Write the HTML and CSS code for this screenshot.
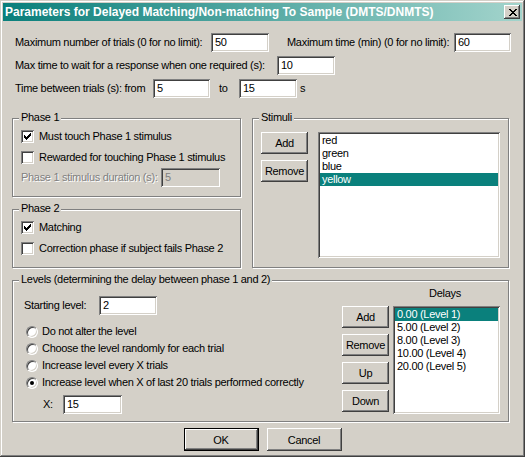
FILE: index.html
```html
<!DOCTYPE html>
<html>
<head>
<meta charset="utf-8">
<title>Parameters for Delayed Matching/Non-matching To Sample (DMTS/DNMTS)</title>
<link rel="stylesheet" href="styles.css">
</head>
<body>
<div class="window">
  <div class="titlebar">
    <span class="title">Parameters for Delayed Matching/Non-matching To Sample (DMTS/DNMTS)</span>
    <span class="close"><svg width="8" height="7" viewBox="0 0 8 7" shape-rendering="crispEdges"><path d="M0 0h2v1H0zM6 0h2v1H6zM1 1h2v1H1zM5 1h2v1H5zM2 2h4v1H2zM3 3h2v1H3zM2 4h4v1H2zM1 5h2v1H1zM5 5h2v1H5zM0 6h2v1H0zM6 6h2v1H6z"/></svg></span>
  </div>
  <div class="content">
    <div class="row">
      <span class="lbl w196">Maximum number of trials (0 for no limit):</span>
      <span class="edit">50</span>
      <span class="lbl w167 ml18">Maximum time (min) (0 for no limit):</span>
      <span class="edit w57">60</span>
    </div>
    <div class="row">
      <span class="lbl w262">Max time to wait for a response when one required (s):</span>
      <span class="edit">10</span>
    </div>
    <div class="row">
      <span class="lbl w138">Time between trials (s): from</span>
      <span class="edit w57">5</span>
      <span class="lbl w20 ml9">to</span>
      <span class="edit">15</span>
      <span class="lbl ml3">s</span>
    </div>

    <div class="cols">
      <div class="leftcol">
        <div class="group">
          <span class="legend">Phase 1</span>
          <div class="grp-body mt2">
            <div class="chk-row"><span class="chk"><svg width="7" height="7" viewBox="0 0 7 7" shape-rendering="crispEdges"><path d="M0 2h1v3H0zM1 3h1v3H1zM2 4h1v3H2zM3 3h1v3H3zM4 2h1v3H4zM5 1h1v3H5zM6 0h1v3H6z"/></svg></span><span class="chk-lbl">Must touch Phase 1 stimulus</span></div>
            <div class="chk-row"><span class="chk"></span><span class="chk-lbl">Rewarded for touching Phase 1 stimulus</span></div>
            <div class="row norow">
              <span class="lbl w140 disabled">Phase 1 stimulus duration (s):</span>
              <span class="edit w59 dis-edit">5</span>
            </div>
          </div>
        </div>
        <div class="group mt12">
          <span class="legend">Phase 2</span>
          <div class="grp-body mt2 pb-last">
            <div class="chk-row"><span class="chk"><svg width="7" height="7" viewBox="0 0 7 7" shape-rendering="crispEdges"><path d="M0 2h1v3H0zM1 3h1v3H1zM2 4h1v3H2zM3 3h1v3H3zM4 2h1v3H4zM5 1h1v3H5zM6 0h1v3H6z"/></svg></span><span class="chk-lbl">Matching</span></div>
            <div class="chk-row"><span class="chk"></span><span class="chk-lbl">Correction phase if subject fails Phase 2</span></div>
          </div>
        </div>
      </div>

      <div class="group stimuli">
        <span class="legend">Stimuli</span>
        <div class="stim-body">
          <div class="btncol">
            <span class="btn">Add</span>
            <span class="btn">Remove</span>
          </div>
          <div class="list stim-list">
            <div class="item">red</div>
            <div class="item">green</div>
            <div class="item">blue</div>
            <div class="item sel">yellow</div>
          </div>
        </div>
      </div>
    </div>

    <div class="group levels">
      <span class="legend">Levels (determining the delay between phase 1 and 2)</span>
      <div class="lv-body">
        <div class="lv-left">
          <div class="row start-row">
            <span class="lbl w75">Starting level:</span>
            <span class="edit">2</span>
          </div>
          <div class="radios">
            <div class="radio-row"><span class="radio"></span><span class="radio-lbl">Do not alter the level</span></div>
            <div class="radio-row"><span class="radio"></span><span class="radio-lbl">Choose the level randomly for each trial</span></div>
            <div class="radio-row"><span class="radio"></span><span class="radio-lbl">Increase level every X trials</span></div>
            <div class="radio-row"><span class="radio on"></span><span class="radio-lbl">Increase level when X of last 20 trials performed correctly</span></div>
          </div>
          <div class="row x-row">
            <span class="lbl w20">X:</span>
            <span class="edit w59">15</span>
          </div>
        </div>
        <div class="btncol lv-btns">
          <span class="btn">Add</span>
          <span class="btn">Remove</span>
          <span class="btn">Up</span>
          <span class="btn">Down</span>
        </div>
        <div class="delays">
          <div class="dl-label">Delays</div>
          <div class="list dlist">
            <div class="item sel">0.00 (Level 1)</div>
            <div class="item">5.00 (Level 2)</div>
            <div class="item">8.00 (Level 3)</div>
            <div class="item">10.00 (Level 4)</div>
            <div class="item">20.00 (Level 5)</div>
          </div>
        </div>
      </div>
    </div>

    <div class="actions">
      <span class="btn dlg default">OK</span>
      <span class="btn dlg">Cancel</span>
    </div>
  </div>
</div>
</body>
</html>
```

FILE: styles.css
```css
* { box-sizing: border-box; }
html, body { margin: 0; padding: 0; }
body {
  background: #d4d0c8;
  font-family: "Liberation Sans", Arial, sans-serif;
  font-size: 11px;
  letter-spacing: -0.3px;
  color: #000;
}
.window {
  width: 525px;
  height: 457px;
  padding: 3px;
  background: #d4d0c8;
  box-shadow: inset -1px -1px #404040, inset 1px 1px #d4d0c8, inset -2px -2px #808080, inset 2px 2px #fff;
  display: flex;
  flex-direction: column;
}
.titlebar {
  height: 18px;
  flex: none;
  display: flex;
  align-items: center;
  justify-content: space-between;
  padding: 0 2px 0 2px;
  background: linear-gradient(90deg, #0a7f7b 0%, #a3d4cc 100%);
}
.title {
  color: #fff;
  font-weight: bold;
  font-size: 12px;
  letter-spacing: 0;
  line-height: 18px;
  white-space: nowrap;
}
.close {
  width: 16px;
  height: 14px;
  background: #d4d0c8;
  box-shadow: inset -1px -1px #404040, inset 1px 1px #fff, inset -2px -2px #808080;
  display: flex;
  align-items: center;
  justify-content: center;
  padding-left: 1px;
}
.close svg { display: block; fill: #000; }

.content { padding: 12px 0 0 9px; flex: 1; }

.row { display: flex; align-items: center; height: 19px; padding-left: 3px; }
.row + .row { margin-top: 4px; }
.row.norow { padding-left: 0; margin-top: 0; }
.lbl { white-space: nowrap; line-height: 13px; flex: none; }
.w196 { width: 196px; }
.w167 { width: 167px; }
.w262 { width: 262px; }
.w138 { width: 138px; }
.w140 { width: 140px; }
.w75 { width: 75px; }
.w20 { width: 20px; }
.ml18 { margin-left: 18px; }
.ml9 { margin-left: 9px; }
.ml3 { margin-left: 3px; }
.mt2 { margin-top: 2px; }
.mt12 { margin-top: 12px; }

.edit {
  flex: none;
  width: 58px;
  height: 19px;
  line-height: 19px;
  padding: 0 3px 0 4px;
  background: #fff;
  box-shadow: inset 1px 1px #808080, inset -1px -1px #fff, inset 2px 2px #404040, inset -2px -2px #d4d0c8;
  white-space: nowrap;
}
.edit.w57 { width: 57px; }
.edit.w59 { width: 59px; }
.dis-edit { background: #d4d0c8; color: #808080; }
.disabled { color: #808080; text-shadow: 1px 1px #fff; }

.cols {
  display: grid;
  grid-template-columns: 229px 257px;
  column-gap: 11px;
  margin-top: 20px;
}
.leftcol { display: flex; flex-direction: column; }

.group {
  border: 1px solid #808080;
  box-shadow: inset 1px 1px #fff, 1px 1px #fff;
  padding: 0 8px 9px 8px;
}
.legend {
  display: block;
  width: fit-content;
  height: 13px;
  line-height: 13px;
  margin: -8px 0 0 -2px;
  padding: 0 2px;
  background: #d4d0c8;
  white-space: nowrap;
}
.pb-last { margin-bottom: -1px; }

.chk-row { display: flex; align-items: center; height: 21px; }
.chk {
  flex: none;
  width: 13px;
  height: 13px;
  padding: 3px;
  background: #fff;
  box-shadow: inset 1px 1px #808080, inset -1px -1px #fff, inset 2px 2px #404040, inset -2px -2px #d4d0c8;
}
.chk svg { display: block; fill: #000; }
.chk-lbl { margin-left: 5px; white-space: nowrap; line-height: 13px; }

.stimuli { display: flex; flex-direction: column; }
.stimuli .legend { align-self: flex-start; }
.stim-body { flex: 1; display: flex; margin-top: 8px; }
.btncol { display: flex; flex-direction: column; gap: 6px; flex: none; }
.btn {
  width: 47px;
  height: 22px;
  display: flex;
  align-items: center;
  justify-content: center;
  background: #d4d0c8;
  box-shadow: inset -1px -1px #404040, inset 1px 1px #fff, inset -2px -2px #808080, inset 2px 2px #d4d0c8;
  white-space: nowrap;
}
.stim-list { margin-left: 10px; width: 182px; }

.list {
  background: #fff;
  box-shadow: inset 1px 1px #808080, inset -1px -1px #fff, inset 2px 2px #404040, inset -2px -2px #d4d0c8;
  padding: 2px;
}
.item { height: 13px; line-height: 13px; padding-left: 2px; white-space: nowrap; }
.item.sel { background: #0a807c; color: #fff; }

.levels { margin-top: 12px; width: 497px; padding-bottom: 7px; }
.lv-body { display: flex; align-items: flex-start; }
.lv-left { flex: 1; margin-top: 10px; }
.start-row { padding-left: 3px; }
.radios { margin-top: 8px; }
.radio-row { display: flex; align-items: center; height: 17px; padding-left: 5px; }
.radio {
  flex: none;
  width: 12px;
  height: 12px;
  border-radius: 50%;
  background: #fff;
  border: 1px solid;
  border-color: #808080 #fff #fff #808080;
  box-shadow: inset 1px 1px #404040, inset -1px -1px #d4d0c8;
  display: flex;
  align-items: center;
  justify-content: center;
}
.radio.on::after {
  content: "";
  width: 4px;
  height: 4px;
  border-radius: 50%;
  background: #000;
}
.radio-lbl { margin-left: 4px; white-space: nowrap; line-height: 13px; }
.row.x-row { margin-top: 4px; padding-left: 22px; }
.lv-btns { margin-top: 20px; }
.delays { margin-left: 4px; width: 107px; }
.dl-label { text-align: center; line-height: 13px; margin-top: 1px; padding-right: 3px; }
.dlist { margin-top: 6px; height: 108px; }

.actions { display: flex; justify-content: center; gap: 8px; margin-top: 6px; padding-right: 9px; }
.btn.dlg { width: 75px; height: 23px; }
.btn.default {
  box-shadow: inset 0 0 0 1px #000, inset -2px -2px #404040, inset 2px 2px #fff, inset -3px -3px #808080;
}
```
